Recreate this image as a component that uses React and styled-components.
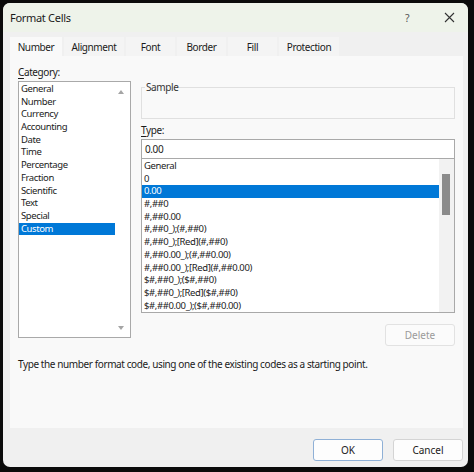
import React from 'react'
import styled, { createGlobalStyle } from 'styled-components'

const categories = [
  'General', 'Number', 'Currency', 'Accounting', 'Date', 'Time',
  'Percentage', 'Fraction', 'Scientific', 'Text', 'Special', 'Custom',
]

const formats = [
  'General', '0', '0.00', '#,##0', '#,##0.00', '#,##0_);(#,##0)',
  '#,##0_);[Red](#,##0)', '#,##0.00_);(#,##0.00)', '#,##0.00_);[Red](#,##0.00)',
  '$#,##0_);($#,##0)', '$#,##0_);[Red]($#,##0)', '$#,##0.00_);($#,##0.00)',
]

const tabs = [
  { label: 'Number', width: 52 },
  { label: 'Alignment', width: 60 },
  { label: 'Font', width: 49 },
  { label: 'Border', width: 49 },
  { label: 'Fill', width: 49 },
  { label: 'Protection', width: 60 },
]

const GlobalStyle = createGlobalStyle`
  body {
    margin: 0;
    background: #0b0b0b;
    font-family: "Noto Sans", "Open Sans", sans-serif;
    letter-spacing: -0.4px;
    color: #1b1b1b;
  }
`

const Frame = styled.div`
  width: 474px;
  height: 472px;
  box-sizing: border-box;
  padding: 3px 6px 5px 3px;
  display: flex;
`

const Dialog = styled.div`
  flex: 1;
  display: flex;
  flex-direction: column;
  background: #f0f0f0;
  border-radius: 7px;
  overflow: hidden;
`

const TitleBar = styled.div`
  height: 29px;
  flex: none;
  display: flex;
  align-items: center;
  padding: 0 0 0 7px;
  background: #eef3ea;
`

const Title = styled.span`
  font-size: 11px;
  letter-spacing: -0.3px;
  flex: 1;
`

const TitleButton = styled.span`
  width: ${p => p.$w}px;
  display: flex;
  justify-content: center;
  align-items: center;
  font-size: 10.5px;
  color: #555;
`

const TabStrip = styled.div`
  display: flex;
  gap: 1px;
  padding: 5px 7px 0;
  height: 19px;
  flex: none;
`

const Tab = styled.div`
  width: ${p => p.$w}px;
  display: flex;
  align-items: center;
  justify-content: center;
  font-size: 10px;
  background: ${p => (p.$active ? '#f9f9f9' : '#f4f4f4')};
  margin-right: 1px;
`

const Panel = styled.div`
  margin: 0 5px 0 7px;
  height: 372px;
  flex: none;
  background: #f9f9f9;
  box-sizing: border-box;
  padding: 9px 8px 0;
  font-size: 10px;
`

const Columns = styled.div`
  display: grid;
  grid-template-columns: 113px 314px;
  column-gap: 10px;
`

const Label = styled.div`
  height: 16px;
  line-height: 14px;
  font-size: 10px;
  u {
    text-decoration-thickness: 1px;
    text-underline-offset: 2px;
  }
`

const ListBox = styled.div`
  position: relative;
  box-sizing: border-box;
  height: ${p => p.$h}px;
  border: 1px solid #a9a9a9;
  background: #fff;
  padding-top: ${p => p.$pt}px;
  overflow: hidden;
`

const Item = styled.div`
  height: 12.7px;
  line-height: 12.7px;
  padding-left: ${p => p.$pl}px;
  margin-right: ${p => p.$mr}px;
  font-size: ${p => p.$fs}px;
  white-space: nowrap;
  background: ${p => (p.$sel ? '#0078d7' : 'transparent')};
  color: ${p => (p.$sel ? '#fff' : '#1b1b1b')};
`

const Arrow = styled.span`
  position: absolute;
  right: 6px;
  width: 0;
  height: 0;
  border-left: 3px solid transparent;
  border-right: 3px solid transparent;
  ${p => (p.$up
    ? 'top: 8px; border-bottom: 4px solid #a5a5a5;'
    : 'bottom: 7px; border-top: 4px solid #a5a5a5;')}
`

const RightCol = styled.div`
  display: flex;
  flex-direction: column;
  padding-top: 16px;
`

const SampleBox = styled.fieldset`
  margin: 0;
  padding: 0;
  height: 38px;
  box-sizing: border-box;
  border: 1px solid #e0e0e0;
  legend {
    margin-left: 3px;
    padding: 0 1px;
    font-size: 10px;
    line-height: 12px;
    color: #333;
  }
`

const TypeLabel = styled(Label)`
  margin-top: 4px;
`

const Input = styled.div`
  height: 20px;
  box-sizing: border-box;
  border: 1px solid #a9a9a9;
  background: #fff;
  padding-left: 3px;
  line-height: 18px;
  font-size: 10px;
`

const Track = styled.div`
  position: absolute;
  top: 0;
  right: 0;
  bottom: 0;
  width: 15px;
  background: #f2f2f2;
`

const Thumb = styled.div`
  position: absolute;
  top: 15px;
  left: 3px;
  width: 8px;
  height: 41px;
  background: #8b8b8b;
`

const DeleteButton = styled.button`
  align-self: flex-end;
  margin-top: 11px;
  width: 70px;
  height: 22px;
  border: 1px solid #e2e2e2;
  border-radius: 3px;
  background: #fbfbfb;
  color: #9a9a9a;
  font: inherit;
  font-size: 10px;
`

const Hint = styled.div`
  margin-top: 11px;
  font-size: 10px;
  line-height: 14px;
`

const Footer = styled.div`
  display: flex;
  justify-content: flex-end;
  gap: 10px;
  padding: 11px 5px 0;
`

const Button = styled.button`
  width: 70px;
  height: 22px;
  border-radius: 3px;
  border: 1px solid ${p => (p.$primary ? '#8fb0d6' : '#d4d4d4')};
  background: #fdfdfd;
  font: inherit;
  font-size: 10px;
  color: #1b1b1b;
`

const CloseIcon = () => (
  <svg width="11" height="11" viewBox="0 0 11 11">
    <path d="M1 1 L10 10 M10 1 L1 10" stroke="#333" strokeWidth="1.1" />
  </svg>
)

export default function App() {
  return (
    <>
      <GlobalStyle />
      <Frame>
        <Dialog>
          <TitleBar>
            <Title>Format Cells</Title>
            <TitleButton $w={46}>?</TitleButton>
            <TitleButton $w={38}><CloseIcon /></TitleButton>
          </TitleBar>
          <TabStrip>
            {tabs.map((t, i) => (
              <Tab key={t.label} $w={t.width} $active={i === 0}>{t.label}</Tab>
            ))}
          </TabStrip>
          <Panel>
            <Columns>
              <div>
                <Label><u>C</u>ategory:</Label>
                <ListBox $h={257} $pt={1}>
                  {categories.map(c => (
                    <Item key={c} $pl={2} $mr={15} $fs={9.5} $sel={c === 'Custom'}>{c}</Item>
                  ))}
                  <Arrow $up />
                  <Arrow />
                </ListBox>
              </div>
              <RightCol>
                <SampleBox>
                  <legend>Sample</legend>
                </SampleBox>
                <TypeLabel><u>T</u>ype:</TypeLabel>
                <Input>0.00</Input>
                <ListBox $h={155} $pt={1} style={{ marginTop: -1 }}>
                  {formats.map(f => (
                    <Item key={f} $pl={2} $mr={15} $fs={9.5} $sel={f === '0.00'}>{f}</Item>
                  ))}
                  <Track><Thumb /></Track>
                </ListBox>
                <DeleteButton>Delete</DeleteButton>
              </RightCol>
            </Columns>
            <Hint>Type the number format code, using one of the existing codes as a starting point.</Hint>
          </Panel>
          <Footer>
            <Button $primary>OK</Button>
            <Button>Cancel</Button>
          </Footer>
        </Dialog>
      </Frame>
    </>
  )
}
